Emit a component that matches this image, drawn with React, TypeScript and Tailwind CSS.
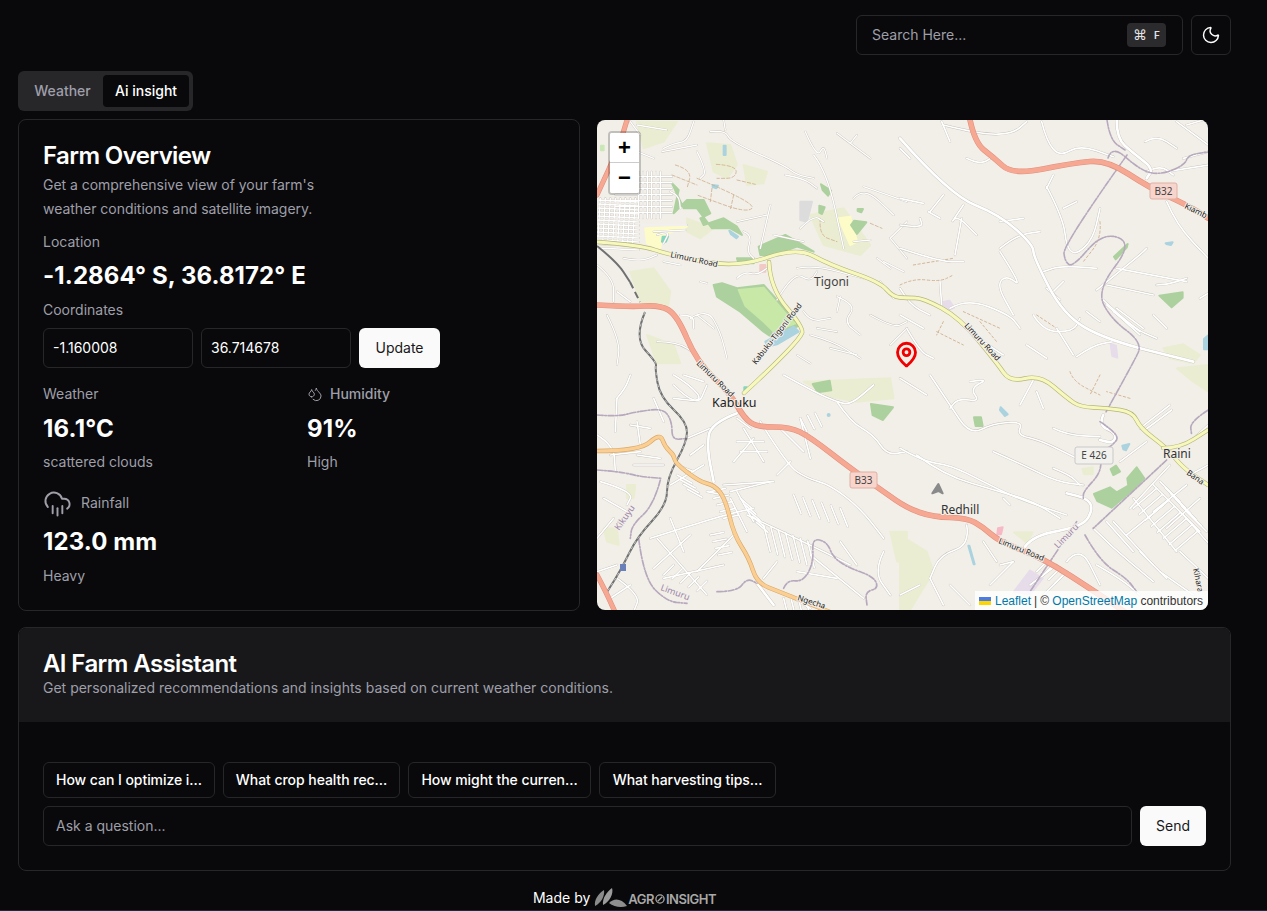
import { CloudRain, Droplets, MapPin, Moon } from "lucide-react";

type Pt = [number, number];

// smooth a point list with quadratic midpoints, so roads don't look like polylines
function smooth(raw: string) {
  const pts: Pt[] = raw.split(" ").map((p) => p.split(",").map(Number) as Pt);
  if (pts.length < 3) return `M${pts[0][0]} ${pts[0][1]}L${pts[1][0]} ${pts[1][1]}`;
  let d = `M${pts[0][0]} ${pts[0][1]}`;
  for (let i = 1; i < pts.length - 1; i++) {
    const mx = (pts[i][0] + pts[i + 1][0]) / 2;
    const my = (pts[i][1] + pts[i + 1][1]) / 2;
    d += `Q${pts[i][0]} ${pts[i][1]} ${mx} ${my}`;
  }
  const last = pts[pts.length - 1];
  return d + `L${last[0]} ${last[1]}`;
}

// n parallel side streets, stepping (sx,sy) from a start, each running (dx,dy)
function hatch(x: number, y: number, sx: number, sy: number, dx: number, dy: number, n: number) {
  const out: string[] = [];
  for (let i = 0; i < n; i++) {
    const ax = x + sx * i;
    const ay = y + sy * i;
    out.push(`${ax},${ay} ${ax + dx},${ay + dy}`);
  }
  return out;
}

function Road({ d, casing, fill, w }: { d: string; casing: string; fill: string; w: number }) {
  const path = smooth(d);
  return (
    <>
      <path d={path} fill="none" stroke={casing} strokeWidth={w + 1.2} strokeLinecap="round" strokeLinejoin="round" />
      <path d={path} fill="none" stroke={fill} strokeWidth={w} strokeLinecap="round" strokeLinejoin="round" />
    </>
  );
}

function Lines({ items, color = "#ffffff", width = 5, dash }: { items: string[]; color?: string; width?: number; dash?: string }) {
  return (
    <>
      {items.map((d, i) => (
        <path key={i} d={smooth(d)} fill="none" stroke={color} strokeWidth={width} strokeDasharray={dash} strokeLinecap="round" strokeLinejoin="round" />
      ))}
    </>
  );
}

// white street with the grey edge the tiles have
function Streets({ items, width = 5 }: { items: string[]; width?: number }) {
  return (
    <>
      <Lines items={items} color="#c4c0b8" width={width + 2} />
      <Lines items={items} width={width} />
    </>
  );
}

function Poly({ points, fill }: { points: string; fill: string }) {
  return <polygon points={points} fill={fill} stroke={fill} strokeWidth={6} strokeLinejoin="round" />;
}

function Label({ x, y, size = 9, rot = 0, fill = "#222", children }: { x: number; y: number; size?: number; rot?: number; fill?: string; children: string }) {
  return (
    <text
      x={x}
      y={y}
      fontSize={size}
      fill={fill}
      fontFamily="'Noto Sans', sans-serif"
      stroke="#f2efe9"
      strokeWidth={2}
      paintOrder="stroke"
      transform={rot ? `rotate(${rot} ${x} ${y})` : undefined}
    >
      {children}
    </text>
  );
}

function Shield({ x, y, w, h, fill, stroke, children }: { x: number; y: number; w: number; h: number; fill: string; stroke: string; children: string }) {
  return (
    <>
      <rect x={x} y={y} width={w} height={h} rx={2} fill={fill} stroke={stroke} />
      <text x={x + w / 2} y={y + h / 2 + 3.5} fontSize={10} textAnchor="middle" fill="#444" fontFamily="'Noto Sans', sans-serif">
        {children}
      </text>
    </>
  );
}

const PALE = "#ebedd3";

const gridA: string[] = [];
for (let y = 185; y <= 310; y += 18) gridA.push(`55,${y} 225,${y}`);
for (let x = 125; x <= 195; x += 13) gridA.push(`${x},170 ${x},310`);
for (let y = 255; y <= 400; y += 12) gridA.push(`0,${y} 125,${y + 6}`);
for (let x = 10; x <= 120; x += 15) gridA.push(`${x},250 ${x - 8},385`);

const minorA = [
  ...gridA,
  "200,100 230,85 270,80 290,20", "195,110 300,90", "120,110 170,130", "120,30 210,45",
  "340,50 385,45 400,80 560,150 600,180 650,190", "380,15 385,45", "300,110 330,170 310,190",
  "720,55 820,130", "780,60 760,85", "625,50 660,130 680,90 690,130", "650,120 690,170 740,400",
  "770,250 800,215 890,300", "800,215 930,260", "880,370 930,320", "880,370 930,430",
  "565,180 620,190 660,220", "520,270 490,400", "420,320 510,300", "440,350 465,360 450,410 470,430",
  "610,340 650,300 680,320", "530,360 620,380", "770,380 820,375", "860,440 920,470",
  "600,460 650,450 800,490", "540,555 590,470 640,500 660,470", "620,590 640,620 700,610",
  "640,660 710,680 790,730", "720,545 780,570 740,620 790,660", "280,610 330,580 370,650 390,730",
  "180,680 240,680 300,720", "30,600 70,680 60,750", "0,450 50,490 50,560", "60,530 100,560",
  "300,600 350,640", "420,490 440,470 480,480 510,460", "220,230 245,240 250,280", "170,350 265,345",
  "130,330 270,330", "180,360 220,345 200,385", "850,500 890,550", "730,545 720,590", "930,640 880,690",
  "250,600 290,600 290,640", "310,500 330,505", "200,440 250,450", "80,430 130,440 180,420", "100,20 130,60",
  "660,640 720,650", "840,430 880,460", "700,700 780,720", "600,720 640,745", "820,600 890,640 930,620",
];

const minorB = [
  "125,20 150,80", "130,30 250,60 340,55 380,20", "425,20 440,80 480,125 540,90 640,125", "200,130 240,150 280,125",
  "90,290 130,240", "85,290 120,310", "190,270 150,330 170,300 230,360", "185,310 165,420", "0,250 70,265",
  "0,330 70,340 60,310", "0,400 120,440 190,440", "300,320 370,310", "300,400 350,360 420,350",
  "300,410 370,520 320,480 290,510 340,600", "440,220 460,180", "440,215 490,310 500,400 530,420 580,370 600,280",
  "490,280 530,260", "590,460 490,450 430,470", "590,525 720,420 740,400", "620,510 760,540", "650,460 860,500",
  "770,510 800,510 860,490", "900,550 925,535", "800,260 830,330 925,430", "735,80 770,60 830,100",
  "740,170 780,150 820,180", "0,520 30,570 90,600", "150,580 200,550 330,600 360,640", "530,725 580,690 640,680",
  "400,600 430,650 520,650 540,610", "120,500 125,570", "610,555 700,640 770,670", "640,590 720,650",
  "460,530 490,500", "440,520 480,555", "830,20 925,90", "850,130 925,110", "800,170 925,150",
  "560,590 600,620", "620,570 720,660", "650,580 730,640", "0,100 30,130", "20,640 60,710 100,730", "380,690 440,730",
  "860,30 910,15", "0,600 70,640", "470,640 520,720", "760,600 800,640", "250,680 310,720",
];

const minorC = [
  "560,30 650,80 720,110 760,120 830,60", "720,110 760,170 830,210 870,270 930,260", "60,100 85,70 100,30", "60,100 55,200",
  "230,30 280,60 320,110 230,100", "420,230 500,230", "440,190 500,290", "410,290 470,220", "430,260 510,260",
  "270,220 340,190", "490,170 570,300 630,340 700,360 790,430 860,520", "540,330 580,290", "400,380 520,350",
  "160,520 380,450 470,430", "450,450 660,550 760,600", "170,610 280,510", "180,520 330,690", "410,510 300,620",
  "200,640 380,600", "610,160 640,280", "550,190 620,260",
  "420,380 470,470", "400,400 450,500", "380,360 530,350", "120,170 130,240", "100,180 160,190", "0,210 50,240 55,320",
  "10,350 110,380 90,420", "50,460 0,520", "220,460 260,560", "60,640 130,690 110,740", "540,590 500,640", "600,620 720,640",
  "640,570 800,700", "860,560 830,620 880,690", "730,530 780,600", "240,300 290,320", "220,360 320,300", "330,380 380,390",
  "230,60 300,130 330,60", "460,190 420,160", "590,700 640,730", "0,620 60,600", "200,170 170,100", "260,30 320,50",
  "120,270 190,280", "110,300 200,300", "40,270 130,260", "280,270 320,240", "20,400 90,440", "40,700 100,660",
  ...hatch(500, 480, 22, 8, 20, 80, 7),
  ...hatch(590, 390, 28, 8, 22, 55, 6),
  ...hatch(340, 380, 10, 20, 45, -10, 5),
  ...hatch(430, 400, 12, 18, 35, 30, 5),
  ...hatch(240, 330, 10, 14, 45, 25, 4),
  ...hatch(340, 510, 8, 20, 40, -8, 4),
  ...hatch(230, 600, 25, 12, -30, 30, 5),
  ...hatch(560, 700, 22, 0, 10, 40, 4),
  ...hatch(610, 160, 22, -8, 20, 40, 3),
];

const minorD = [
  "0,250 70,290 150,300 250,350 350,400 500,450", "50,270 130,330 300,380 400,410 480,460", "280,260 370,300 470,350 550,360",
  "90,30 150,120 210,210 280,175 370,170 350,210 420,225 530,280", "210,50 270,40 210,70 240,110 175,100 150,130",
  "360,120 400,45", "410,80 430,130", "460,190 500,210 600,215", "690,430 810,300", "760,440 860,360", "800,490 900,400",
  "620,470 700,560", "700,400 830,560", "760,360 900,500", "680,510 790,420", "850,450 930,540", "200,480 210,540 120,570 90,640",
  "90,640 130,720", "250,530 290,590", "500,590 540,540 600,660", "580,490 640,550 760,650", "720,190 810,120", "735,195 815,135",
  "0,40 80,90", "640,470 760,600", "720,560 800,640", "840,560 925,640", "780,620 880,690", "390,660 470,600", "430,690 500,620",
  "740,230 660,290", "870,230 925,180", "870,330 925,300", "460,310 510,330 540,360", "310,400 330,420", "300,600 340,590",
  "340,590 270,660", "150,660 210,720", "0,690 60,660", "590,600 660,640 720,690",
  ...hatch(700, 430, 18, 18, 70, -60, 8),
  ...hatch(780, 350, 16, 18, 60, 60, 6),
  ...hatch(410, 620, 18, 12, 30, -30, 4),
];

const purple = [
  "1127,155 1063,245 1065,262 1073,267 1103,232 1133,243 1097,290 1110,318 1143,343 1133,363 1106,412",
  "1108,158 1112,145 1140,170 1160,175 1185,165 1188,155 1208,152",
  "1107,120 1110,140 1125,150",
];
const purpleC = [
  "0,150 60,155 120,140 200,130 225,170 225,225 270,220", "0,315 70,320 130,335 195,340", "190,345 170,420 105,480 100,520",
  "125,520 140,640 210,710 270,715", "360,680 420,680 450,640 480,655",
  "560,670 570,645 620,650 650,590 645,520 690,530 710,580 760,610 830,635 845,670 805,680 810,720",
];
const purpleD = [
  "600,170 660,210 640,240 600,260 605,320 550,380 550,400", "530,470 390,680", "555,510 600,590 680,640 710,680",
  "800,285 580,490", "925,135 870,170 875,210",
];

const railway = "645,312 634,338 657,363 655,368 660,397 687,422 687,442 667,478 667,505 637,537 622,568 607,592";

function MapArt() {
  return (
    <svg viewBox="597 120 611 490" className="block h-full w-full">
      <rect x={597} y={120} width={611} height={490} fill="#f2efe9" />

      {/* pale landuse */}
      <g transform="translate(597 115) scale(0.3333)">
        <Poly points="120,20 240,20 200,80 140,100" fill={PALE} />
        <Poly points="330,85 400,90 420,150 390,190 350,170" fill={PALE} />
        <Poly points="440,150 510,170 500,205 450,210" fill={PALE} />
        <Poly points="100,470 170,460 220,530 210,590 130,560" fill={PALE} />
        <Poly points="270,310 350,340 310,370 270,350" fill={PALE} />
        <Poly points="640,300 740,280 820,390 790,420 680,390" fill={PALE} />
        <Poly points="150,660 230,690 250,745 180,745" fill={PALE} />
        <Poly points="145,340 270,335 195,360 190,400 150,385" fill="#fdfcc8" />
        <Poly points="725,310 760,305 780,380 760,390" fill="#fdfcc8" />
        <Poly points="610,260 645,260 630,320 610,315" fill="#dcdcdc" />
        <Poly points="490,450 505,450 505,470 490,470" fill="#f3c9c5" />
        <Poly points="197,365 213,365 207,380 195,380" fill="#83d6bf" />
        <Poly points="12,92 20,92 20,106 12,106" fill="#c9e8b5" />
      </g>

      {/* greens and water, top left */}
      <g transform="translate(597 115) scale(0.3333)">
        <Poly points="225,205 245,225 230,295 270,255 320,255 340,295 310,310 320,330 380,310 420,335 435,360 400,340 345,340 300,280 260,280" fill="#add19e" />
        <Poly points="485,395 565,360 600,380 650,410 600,395 530,420 490,420" fill="#add19e" />
        <Poly points="420,430 470,430 470,445 425,445" fill="#add19e" />
        <Poly points="350,510 375,505 420,520 500,510 590,610 610,630 530,670 500,650 430,590 360,545" fill="#add19e" />
        <Poly points="425,525 500,518 582,615 595,625 530,650 502,622 445,572" fill="#c8e8a8" />
        <Poly points="505,680 590,635 605,650 540,688 512,695" fill="#aad3df" />
        <Poly points="380,92 386,92 386,120 380,120" fill="#aad3df" />
        <Poly points="347,210 363,212 358,220 347,216" fill="#aad3df" />
        <Poly points="397,347 423,365 418,370 402,358" fill="#aad3df" />
        <Poly points="672,208 702,227 693,242 677,225" fill="#add19e" />
        <Poly points="667,272 683,277 675,297 667,293" fill="#add19e" />
        <Poly points="782,282 798,282 793,292 782,288" fill="#add19e" />
        <Poly points="772,317 808,322 780,357 762,330" fill="#add19e" />
      </g>
      <g transform="translate(900 115) scale(0.3333)">
        <Poly points="778,542 848,532 848,548 815,577" fill="#add19e" />
        <Poly points="642,425 683,387 680,398 647,433" fill="#add19e" />
        <Poly points="790,700 850,688 900,720 880,745 810,730" fill={PALE} />
        <Poly points="632,687 648,692 652,728 637,723" fill="#e6dcea" />
        <Poly points="127,562 148,557 162,578 142,588" fill="#e6dcea" />
        <Poly points="912,672 923,662 923,703 912,703" fill="#aad3df" />
        <Poly points="797,385 818,382 813,390 802,388" fill="#aad3df" />
      </g>
      <g transform="translate(597 365) scale(0.3333)">
        <Poly points="620,50 880,40 890,100 780,110 700,95" fill={PALE} />
        <Poly points="647,57 698,47 703,76 662,82" fill="#add19e" />
        <Poly points="822,117 888,127 858,165 827,150" fill="#add19e" />
        <Poly points="20,490 60,490 65,540 30,530" fill={PALE} />
        <Poly points="90,360 115,360 110,400 90,400" fill={PALE} />
        <Poly points="880,500 930,500 930,590 900,590" fill={PALE} />
        <Poly points="442,67 450,67 448,78 442,78" fill="#83d6bf" />
        <circle cx={695} cy={150} r={6} fill="#aad3df" />
      </g>
      <g transform="translate(900 365) scale(0.3333)">
        <Poly points="0,510 80,560 100,620 30,735 0,735" fill={PALE} />
        <Poly points="222,157 243,157 248,183 227,183" fill="#add19e" />
        <Poly points="302,127 323,148 315,153 300,135" fill="#aad3df" />
        <Poly points="205,542 208,542 224,598 221,598" fill="#aad3df" />
        <Poly points="667,242 688,237 678,256 670,253" fill="#aad3df" />
        <Poly points="632,312 648,302 660,320 640,330" fill="#add19e" />
        <Poly points="582,387 630,367 650,382 685,362 682,340 710,307 733,340 700,373 635,428 592,408" fill="#add19e" />
        <Poly points="342,680 390,617 428,640 390,688" fill="#e6dcea" />
        <Poly points="830,10 925,0 925,80 880,50" fill={PALE} />
        <Poly points="342,502 398,502 380,533" fill={PALE} />
        <Poly points="294,490 308,487 303,508 292,508" fill="#f7b9c6" />
        <Poly points="547,312 578,307 578,328 552,328" fill={PALE} />
        <Poly points="97,385 115,357 128,385 115,378" fill="#8a8a8a" />
      </g>

      {/* tracks */}
      <g transform="translate(597 115) scale(0.3333)" opacity={0.9}>
        <Lines
          color="#cda985"
          width={2.5}
          dash="10 6"
          items={[
            "235,150 285,165 270,220", "225,180 300,210", "300,190 480,265 450,295 300,240", "345,220 340,260", "410,240 400,285",
            "358,148 420,152 415,190 360,190", "420,195 475,208", "670,310 665,360 720,380", "820,325 855,340",
          ]}
        />
      </g>
      <g transform="translate(900 115) scale(0.3333)">
        <Lines
          color="#cda985"
          width={2.5}
          dash="7 7"
          items={[
            "40,450 160,430", "0,510 40,490 120,500 160,480", "110,650 190,690", "130,620 110,660", "190,590 300,640", "240,620 290,680",
            "410,600 470,640", "600,320 605,370 550,440",
          ]}
        />
      </g>
      <g transform="translate(900 365) scale(0.3333)">
        <Lines color="#cda985" width={2.5} dash="7 7" items={["510,20 520,50 600,90", "600,30 570,90", "690,100 620,80"]} />
      </g>

      {/* streets */}
      <g transform="translate(597 115) scale(0.3333)">
        <Streets items={minorA} width={4} />
      </g>
      <g transform="translate(900 115) scale(0.3333)">
        <Streets items={minorB} />
        <Streets width={8} items={["0,70 150,240 300,300 400,390 400,425 490,600 620,675 880,740", "650,15 650,70 700,115 760,160 740,190"]} />
      </g>
      <g transform="translate(597 365) scale(0.3333)">
        <Streets items={minorC} />
        <Streets width={8} items={["420,145 340,175 330,250 350,350", "480,655 530,720"]} />
      </g>
      <g transform="translate(900 365) scale(0.3333)">
        <Streets items={minorD} />
        <Streets width={8} items={["375,545 400,510 550,485 580,430 560,400 500,385", "610,150 595,180 650,205 640,235 600,225"]} />
      </g>

      {/* admin boundaries */}
      <Lines items={purple} color="#b6a8bd" width={1.6} dash="6 1.5 1.5 1.5" />
      <g transform="translate(597 365) scale(0.3333)">
        <Lines items={purpleC} color="#b6a8bd" width={5} dash="18 5 5 5" />
      </g>
      <g transform="translate(900 365) scale(0.3333)">
        <Lines items={purpleD} color="#b6a8bd" width={5} dash="18 5 5 5" />
      </g>

      {/* railway */}
      <path d={smooth("597,246 617,262 630,282")} fill="none" stroke="#707070" strokeWidth={2} />
      <path d={smooth("630,282 640,302")} fill="none" stroke="#707070" strokeWidth={2} strokeDasharray="7 4" />
      <path d={smooth(railway)} fill="none" stroke="#707070" strokeWidth={2} strokeLinejoin="round" />
      <path d={smooth(railway)} fill="none" stroke="#ffffff" strokeWidth={0.6} strokeDasharray="3 3" />
      <rect x={620} y={564} width={6} height={7} fill="#6a80b8" />

      {/* main roads */}
      <Road d="597,451 640,451 660,433 665,447 674,455 675,463 700,482 714,485 725,498 734,535 749,558 757,583 780,592 830,612" casing="#d9a867" fill="#fbcf93" w={3.2} />
      <Road d="597,242 640,245 670,255 737,268 797,247 830,265 880,282 893,297 907,298 923,298 960,318 997,363 1010,382 1040,375 1067,398 1080,407 1107,408 1133,412 1140,428 1167,448 1183,468 1208,485" casing="#b5b577" fill="#f7f8bd" w={3.2} />
      <Road d="1163,448 1180,448 1208,430" casing="#b5b577" fill="#f7f8bd" w={3} />
      <Road d="769,262 770,288 804,328 800,338 774,365 744,393" casing="#b5b577" fill="#f7f8bd" w={3.2} />
      <Road d="627,120 620,145 597,195" casing="#e0917e" fill="#f7a893" w={4} />
      <Road d="597,305 630,307 660,305 677,315 697,362 730,393 744,418 757,427 790,427 810,437 850,468 884,492 907,508 933,517 967,518 983,527 1000,542 1043,558 1100,595 1125,612" casing="#e0917e" fill="#f7a893" w={4.5} />
      <Road d="970,120 975,143 993,157 1013,175 1073,163 1107,160 1150,188 1187,205 1208,218" casing="#e0917e" fill="#f7a893" w={4.5} />
      <Road d="597,575 605,590 615,612" casing="#e0917e" fill="#f7a893" w={4} />

      {/* road names and places */}
      <Label x={670} y={257} size={8} rot={12}>Limuru Road</Label>
      <Label x={756} y={365} size={8} rot={-52}>Kabuku-Tigoni Road</Label>
      <Label x={696} y={364} size={8} rot={44}>Limuru Road</Label>
      <Label x={964} y={326} size={8} rot={47}>Limuru Road</Label>
      <Label x={998} y={543} size={8} rot={22}>Limuru Road</Label>
      <Label x={797} y={600} size={8} rot={18}>Ngecha</Label>
      <Label x={1184} y={208} size={8} rot={26}>Kiamb</Label>
      <Label x={1186} y={474} size={8} rot={35}>Bana</Label>
      <Label x={1193} y={569} size={8} rot={78}>Kihara</Label>
      <Label x={619} y={531} size={9} rot={-55} fill="#9c85a8">Kikuyu</Label>
      <Label x={660} y={590} size={9} rot={20} fill="#9c85a8">Limuru</Label>
      <Label x={1058} y={549} size={9} rot={-46} fill="#9c85a8">Limuru</Label>
      <Label x={814} y={286} size={12} fill="#444">Tigoni</Label>
      <Label x={712} y={407} size={12.5}>Kabuku</Label>
      <Label x={941} y={514} size={12} fill="#333">Redhill</Label>
      <Label x={1163} y={458} size={12} fill="#333">Raini</Label>

      <Shield x={1150} y={183} w={27} h={16} fill="#f7d5cc" stroke="#dfb0a4">B32</Shield>
      <Shield x={850} y={472} w={27} h={16} fill="#f7d5cc" stroke="#dfb0a4">B33</Shield>
      <Shield x={1075} y={447} w={38} h={17} fill="#f2f1ee" stroke="#c9c9c9">E 426</Shield>
    </svg>
  );
}

function MapPanel() {
  return (
    <div className="relative ml-[17px] mt-px h-[490px] w-[611px] overflow-hidden rounded-lg">
      <MapArt />
      <MapPin size={27} strokeWidth={2.5} className="absolute left-[296px] top-[221px] text-[#f00000]" />
      <div className="absolute left-[11px] top-[11px] w-[33px] overflow-hidden rounded border-2 border-black/20 bg-clip-padding">
        <div className="flex h-[30px] items-center justify-center border-b border-[#ccc] bg-white text-[22px] leading-none font-bold text-black [font-family:'Liberation_Sans',sans-serif]">+</div>
        <div className="flex h-[30px] items-center justify-center bg-white text-[22px] leading-none font-bold text-black [font-family:'Liberation_Sans',sans-serif]">−</div>
      </div>
      <div className="absolute right-0 bottom-0 flex h-[19px] w-[233px] items-center bg-white/80 pl-[4px] text-xs text-[#333] [font-family:'Liberation_Sans',sans-serif]">
        <svg width="12" height="8" viewBox="0 0 12 8" className="mr-[4px]">
          <rect width="12" height="4" fill="#4C7BE1" />
          <rect y="4" width="12" height="4" fill="#FFD500" />
        </svg>
        <span className="text-[#0078a8]">Leaflet</span>
        <span className="mx-[3px]">|</span>
        <span>©&nbsp;</span>
        <span className="text-[#0078a8]">OpenStreetMap</span>
        <span>&nbsp;contributors</span>
      </div>
    </div>
  );
}

function Stat({ value, note }: { value: string; note: string }) {
  return (
    <>
      <div className="mt-[9px] text-2xl leading-8 font-bold tracking-[0.2px] text-white">{value}</div>
      <div className="mt-[7px] text-sm leading-5 text-zinc-400">{note}</div>
    </>
  );
}

function FieldBox({ value }: { value: string }) {
  return (
    <div className="flex h-10 w-[150px] items-center rounded-md border border-[#27272a] px-[9px] text-sm text-white">{value}</div>
  );
}

function FarmCard() {
  return (
    <div className="h-[492px] w-[562px] rounded-lg border border-[#27272a] px-6 pt-6">
      <h2 className="text-2xl leading-none font-semibold tracking-tight text-white">Farm Overview</h2>
      <p className="mt-[5px] w-[320px] text-sm leading-[24px] tracking-[-0.03px] text-zinc-400">
        Get a comprehensive view of your farm's weather conditions and satellite imagery.
      </p>
      <div className="mt-[11px] text-sm leading-5 text-zinc-400">Location</div>
      <div className="mt-2 text-2xl leading-8 font-bold tracking-[0.1px] text-white">-1.2864° S, 36.8172° E</div>
      <div className="mt-2 text-sm leading-5 text-zinc-400">Coordinates</div>
      <div className="mt-2 flex gap-2">
        <FieldBox value="-1.160008" />
        <FieldBox value="36.714678" />
        <button className="h-10 w-[81px] rounded-md bg-[#fafafa] text-sm font-normal text-[#18181b]">Update</button>
      </div>
      <div className="mt-4 grid grid-cols-2 gap-x-4">
        <div>
          <div className="text-sm leading-5 text-zinc-400">Weather</div>
          <Stat value="16.1°C" note="scattered clouds" />
        </div>
        <div>
          <div className="flex items-center gap-[7px] text-sm leading-5 font-medium text-zinc-400">
            <Droplets size={16} strokeWidth={1.5} />
            Humidity
          </div>
          <Stat value="91%" note="High" />
        </div>
      </div>
      <div className="mt-4 flex h-[30px] items-center gap-[9px] text-sm text-zinc-400">
        <CloudRain size={29} strokeWidth={1.6} />
        Rainfall
      </div>
      <div className="mt-2 text-2xl leading-8 font-bold tracking-[0.1px] text-white">123.0 mm</div>
      <div className="mt-2 text-sm leading-5 text-zinc-400">Heavy</div>
    </div>
  );
}

function PromptChip({ className, children }: { className: string; children: string }) {
  return (
    <button className={`flex h-9 items-center justify-center rounded-md border border-[#27272a] text-sm font-medium whitespace-nowrap text-white ${className}`}>
      {children}
    </button>
  );
}

function AssistantCard() {
  return (
    <div className="mt-4 w-[1213px] overflow-hidden rounded-lg border border-[#27272a]">
      <div className="h-[94px] bg-[#18181b] p-6">
        <h2 className="text-2xl leading-none font-semibold tracking-tight text-white">AI Farm Assistant</h2>
        <p className="mt-0.5 text-sm leading-5 text-zinc-400">
          Get personalized recommendations and insights based on current weather conditions.
        </p>
      </div>
      <div className="px-6 pt-10 pb-6">
        <div className="flex gap-2">
          <PromptChip className="w-[172px] tracking-[-0.05px]">How can I optimize i...</PromptChip>
          <PromptChip className="w-[177px] tracking-[-0.05px]">What crop health rec...</PromptChip>
          <PromptChip className="w-[183px] tracking-[-0.05px]">How might the curren...</PromptChip>
          <PromptChip className="w-[177px] tracking-[-0.05px]">What harvesting tips...</PromptChip>
        </div>
        <div className="mt-2 flex gap-2">
          <div className="flex h-10 flex-1 items-center rounded-md border border-[#27272a] px-3 text-sm text-zinc-400">Ask a question...</div>
          <button className="h-10 w-[66px] rounded-md bg-[#fafafa] text-sm font-normal text-[#18181b]">Send</button>
        </div>
      </div>
    </div>
  );
}

function Logo() {
  return (
    <span className="ml-[4px] flex items-end">
      <svg width="34" height="21" viewBox="0 0 34 21">
        <path d="M1 19C0 13 4 7 10 3C11 9 7 16 1 19Z" fill="#8b8b8b" />
        <path d="M9 18C8 11 13 5 18 1C20 7 15 15 9 18Z" fill="#9c9c9c" />
        <path d="M15 16C20 11 27 11 33 19C27 21 20 20 15 16Z" fill="#8f8f8f" />
      </svg>
      <span className="flex items-center text-[13px] leading-[18px] font-semibold tracking-[-0.5px] text-[#a8a8a8]">
        AGR
        <svg width="10" height="10" viewBox="0 0 11 11" className="mx-px">
          <circle cx="5.5" cy="5.5" r="4.5" fill="none" stroke="#a8a8a8" strokeWidth="1.4" />
          <path d="M3 8L8 3" stroke="#a8a8a8" strokeWidth="1.4" />
        </svg>
        INSIGHT
      </span>
    </span>
  );
}

export default function App() {
  return (
    <div className="h-[911px] overflow-hidden border-b border-[#1c2a44] bg-[#09090b] pt-[15px] pl-[18px] [font-family:Inter,sans-serif]">
      <header className="flex w-[1213px] justify-end gap-2">
        <div className="flex h-10 w-[327px] items-center justify-between rounded-md border border-[#27272a] pr-4 pl-[15px] text-sm text-zinc-400">
          Search Here...
          <kbd className="flex h-6 w-[39px] items-center justify-center gap-[7px] rounded bg-[#2b2b2d] text-[10px] font-semibold text-zinc-200 [font-family:Inter,'DejaVu_Sans',sans-serif]">
            <span className="text-sm leading-none font-normal [font-family:'DejaVu_Sans',sans-serif]">⌘</span>F
          </kbd>
        </div>
        <button className="flex h-10 w-10 items-center justify-center rounded-md border border-[#27272a] text-white">
          <Moon size={20} strokeWidth={1.7} />
        </button>
      </header>

      <div className="mt-4 flex h-10 w-[175px] items-center rounded-md bg-[#27272a] p-1 text-sm font-medium">
        <span className="w-[81px] text-center text-zinc-400">Weather</span>
        <span className="flex h-8 w-[86px] items-center justify-center rounded-sm bg-[#09090b] text-white">Ai insight</span>
      </div>

      <div className="mt-2 flex items-start">
        <FarmCard />
        <MapPanel />
      </div>

      <AssistantCard />

      <footer className="mt-4 flex w-[1213px] items-end justify-center text-sm leading-5 text-white">
        Made by
        <Logo />
      </footer>
    </div>
  );
}
